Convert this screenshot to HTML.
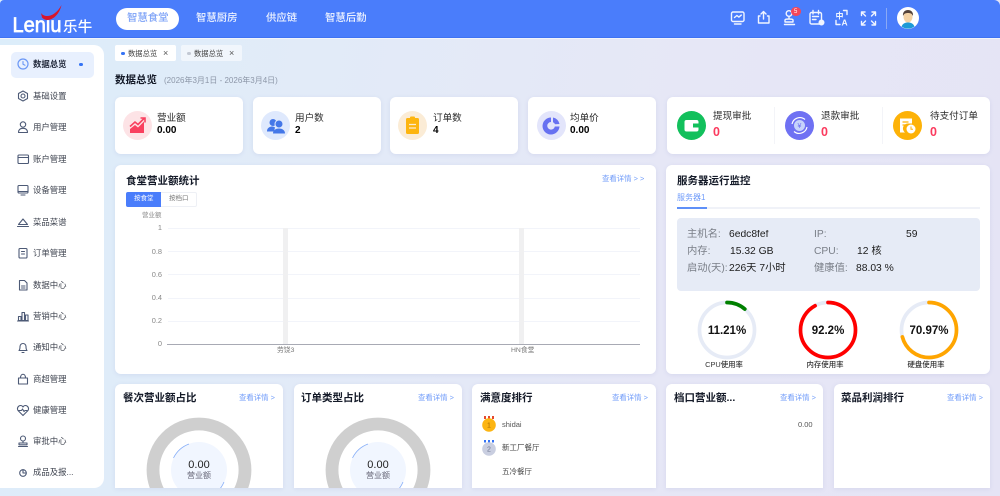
<!DOCTYPE html>
<html lang="zh-CN">
<head>
<meta charset="utf-8">
<title>数据总览</title>
<style>
*{box-sizing:border-box;margin:0;padding:0}
html,body{width:1000px;height:496px;overflow:hidden;background:#fff}
body{position:relative;font-family:"Liberation Sans","Noto Sans CJK SC",sans-serif;color:#222}
.wrap{position:absolute;left:0;top:0;width:1000px;height:496px;overflow:hidden;filter:blur(.35px)}
.bg{position:absolute;left:0;top:0;width:1000px;height:496px;background:linear-gradient(100deg,#dcedfa 0%,#e2ebf8 30%,#e6e7f6 65%,#e5e4f5 100%)}
.hd{position:absolute;left:0;top:0;width:1000px;height:37.5px;background:#4a7dfb;border-bottom:1px solid #3f73f2;border-radius:4px 6px 0 0}
.hl{position:absolute;left:0;top:37.5px;width:1000px;height:1.5px;background:#f2f4fb}
.t{position:absolute;white-space:nowrap;line-height:1}
.c{position:absolute;background:#fff;border-radius:6px;box-shadow:0 1px 4px rgba(120,130,190,.14)}
.clip{overflow:hidden;border-radius:6px 6px 0 0}
.side{position:absolute;left:0;top:45px;width:104px;height:443px;background:#fff;border-radius:0 10px 10px 0}
.act{position:absolute;left:11px;top:52px;width:83px;height:26px;background:#e8f0fe;border-radius:5px}
.m{position:absolute;left:33px;font-size:8.4px;line-height:1;color:#3f4450;white-space:nowrap}
.ic{position:absolute;left:16px;width:14px;height:14px}
.ic *{fill:none;stroke:#4d5a76;stroke-width:1.1;stroke-linecap:round;stroke-linejoin:round}
.ttl{font-size:10.5px;font-weight:700;color:#141a28}
.lnk{font-size:7.4px;color:#6f9bfa}
.lb{font-size:9.6px;color:#2b2b2b}
.val{font-size:10px;font-weight:700;color:#000}
.red{font-size:12.5px;font-weight:700;color:#fb3a5e}
.tick{position:absolute;width:30px;text-align:right;left:132px;font-size:7.4px;line-height:1;color:#888}
.grid{position:absolute;left:168px;width:472px;height:1px;background:#f2f4fa}
.il{font-size:10.3px;color:#7a7f88}
.iv{font-size:10.3px;color:#1c1c1c}
.rt{font-size:11.5px;font-weight:700;color:#111;text-align:center;width:60px}
.rl{font-size:7.4px;font-weight:500;color:#333;text-align:center;width:60px}
svg{position:absolute;overflow:visible}
</style>
</head>
<body>
<div class="wrap">
<div class="bg"></div>

<div class="hd"></div><div class="hl"></div>

<svg style="left:0;top:0" width="110" height="38">
<text x="12.500" y="32" font-family="Liberation Sans" font-size="21.500" font-weight="400" fill="#fff" stroke="#fff" stroke-width=".7" textLength="49" lengthAdjust="spacingAndGlyphs">Leniu</text>
<path d="M41 13C45 18.500 55 17 61.500 5C59 17 48 24 42 17.500Z" fill="#d8162c"/>
</svg>
<div class="t" style="left:63px;top:20.500px;font-size:14.500px;font-weight:500;color:#fff;letter-spacing:.3px">乐牛</div>

<div style="position:absolute;left:116px;top:8px;width:63px;height:22px;border-radius:11px;background:#fff"></div>
<div class="t" style="left:127px;top:14px;font-size:10.400px;color:#7ea3f7;font-weight:500">智慧食堂</div>
<div class="t" style="left:196px;top:14px;font-size:10.400px;color:#eef3ff;font-weight:500">智慧厨房</div>
<div class="t" style="left:266px;top:14px;font-size:10.400px;color:#eef3ff;font-weight:500">供应链</div>
<div class="t" style="left:325px;top:14px;font-size:10.400px;color:#eef3ff;font-weight:500">智慧后勤</div>

<svg style="left:725px;top:2px" width="200" height="36" fill="none" stroke="#f0f5ff" stroke-width="1.400" stroke-linecap="round" stroke-linejoin="round">
<rect x="6.500" y="10" width="12.500" height="9.500" rx="1.500"/><path d="M9.500 22h6.500M9.500 15.500l2.400-2 2 1.600 2.400-2"/>
<path d="M38.500 9.500l-2.500 2.500M38.500 9.500l2.500 2.500M38.500 10v7M35 14h-1.500v7h10.500v-7h-1.500"/>
<circle cx="64" cy="11.500" r="2.800"/><path d="M64 14.500v2.500M60 18c0-.8 1.500-1 4-1s4 .2 4 1v2h-8zM59.500 22.500h10"/>
<rect x="85" y="10.500" width="11.500" height="11.500" rx="1.500"/><path d="M88 8.500v3.500M93.500 8.500v3.500M87.500 14.500h6M87.500 17.500h3.500"/><circle cx="96.500" cy="20.500" r="2.300" fill="#f0f5ff"/>
<path d="M118.500 8.500h3.500v4M111 18.500v4h4"/><text x="110.500" y="16.500" font-size="8" font-weight="700" fill="#f0f5ff" stroke="none" font-family="Noto Sans CJK SC,sans-serif">中</text><text x="116.500" y="23.500" font-size="8.500" font-weight="700" fill="#f0f5ff" stroke="none">A</text>
<path d="M136.500 13.500V10H140M147 10H150.500V13.500M136.500 19.500V23H140M150.500 19.500V23H147M137 10.500l3.500 3.500M150 10.500l-3.500 3.500M137 22.500l3.500-3.500M150 22.500l-3.500-3.500"/>
</svg>
<div style="position:absolute;left:791px;top:7px;width:10px;height:9px;border-radius:5px;background:#f4475a"></div>
<div class="t" style="left:794px;top:8.500px;font-size:6px;color:#fff">5</div>
<div style="position:absolute;left:886px;top:8px;width:1px;height:21px;background:#8aa9f5"></div>
<svg style="left:897px;top:7px" width="22" height="22">
<circle cx="11" cy="11" r="11" fill="#fff"/>
<path d="M4.500 19.500C6 16 8.500 15.500 11 15.500s5 .5 6.500 4a11 11 0 0 1-13 0z" fill="#1d9ad6"/>
<ellipse cx="11" cy="10" rx="4.500" ry="5.500" fill="#f4d2a4"/>
<path d="M6 9c-.5-4 2-6 5-6s5.500 2 5 6c-1-2-2-3-5-3S7 7 6 9z" fill="#54433a"/>
</svg>

<div class="side"></div>
<div class="act"></div>
<svg class="ic" style="top:57px" viewBox="0 0 14 14"><circle cx="7" cy="7" r="5" style="stroke:#6b97f5;stroke-width:1.200"/><path d="M7 4.500V7.200L9 8.200" style="stroke:#6b97f5"/></svg>
<div class="m" style="top:60px;color:#1f2638;font-weight:700">数据总览</div>
<div style="position:absolute;left:79px;top:62.500px;width:3.500px;height:3.500px;border-radius:50%;background:#3573f5"></div>

<svg class="ic" style="top:89px" viewBox="0 0 14 14"><path d="M7 2l4.500 2.500v5L7 12 2.500 9.500v-5z"/><circle cx="7" cy="7" r="2"/></svg>
<div class="m" style="top:92px">基础设置</div>
<svg class="ic" style="top:120px" viewBox="0 0 14 14"><circle cx="7" cy="4.500" r="2.700"/><path d="M2.500 12.500c0-3 2-4.200 4.500-4.200s4.500 1.200 4.500 4.200z"/></svg>
<div class="m" style="top:123px">用户管理</div>
<svg class="ic" style="top:152px" viewBox="0 0 14 14"><rect x="2" y="3" width="10.500" height="8.500" rx="1"/><path d="M2 5.500h10.500"/></svg>
<div class="m" style="top:155px">账户管理</div>
<svg class="ic" style="top:183px" viewBox="0 0 14 14"><rect x="2" y="2.500" width="10" height="7.500" rx="1"/><path d="M5 12h4M2 8.500h10"/></svg>
<div class="m" style="top:186px">设备管理</div>
<svg class="ic" style="top:215px" viewBox="0 0 14 14"><path d="M2.500 9.500L7 4l4.500 5.500zM1.500 11.500h11"/></svg>
<div class="m" style="top:218px">菜品菜谱</div>
<svg class="ic" style="top:246px" viewBox="0 0 14 14"><rect x="3" y="2.500" width="8" height="9.500" rx="1"/><path d="M5.500 5.500h3M5.500 8h3"/></svg>
<div class="m" style="top:249px">订单管理</div>
<svg class="ic" style="top:278px" viewBox="0 0 14 14"><path d="M3.500 2.500H8.500L11 5v7H3.500zM5.500 8h3.500M5.500 10h3.500"/></svg>
<div class="m" style="top:281px">数据中心</div>
<svg class="ic" style="top:309px" viewBox="0 0 14 14"><path d="M1.500 12h11M2.500 7.500h2.500v4H2.500zM6 3.500h2.500v8H6zM9.500 6h2.500v5.500H9.500z"/></svg>
<div class="m" style="top:312px">营销中心</div>
<svg class="ic" style="top:340px" viewBox="0 0 14 14"><path d="M3 10.500c1-1 1-2 1-4a3 3 0 0 1 6 0c0 2 0 3 1 4zM6 12.500h2"/></svg>
<div class="m" style="top:343px">通知中心</div>
<svg class="ic" style="top:372px" viewBox="0 0 14 14"><path d="M2.500 6h9v6h-9zM4.500 6c0-5 5-5 5 0"/></svg>
<div class="m" style="top:375px">商超管理</div>
<svg class="ic" style="top:403px" viewBox="0 0 14 14"><path d="M7 12.500L2 7.500C.5 5 2.500 2.500 4.500 2.500c1 0 2 .5 2.500 1.500.5-1 1.500-1.500 2.500-1.500 2 0 4 2.500 2.500 5zM2.500 7.500h3l1-1.500 1.500 2.500 1-1h2"/></svg>
<div class="m" style="top:406px">健康管理</div>
<svg class="ic" style="top:434px" viewBox="0 0 14 14"><circle cx="7" cy="4.500" r="2.500"/><path d="M7 7v1.500M3 9h8v1.800H3zM2.500 12.500h9"/></svg>
<div class="m" style="top:437px">审批中心</div>
<svg class="ic" style="top:466px" viewBox="0 0 14 14"><circle cx="7" cy="7" r="3.300"/><path d="M7 7V3.700M7 7h3.300"/></svg>
<div class="m" style="top:468px">成品及报...</div>

<div style="position:absolute;left:115px;top:45px;width:61px;height:16px;background:#fff;border-radius:2px"></div>
<div style="position:absolute;left:121px;top:51.500px;width:3.500px;height:3.500px;border-radius:50%;background:#3573f5"></div>
<div class="t" style="left:128px;top:49.500px;font-size:7.300px;color:#444">数据总览</div>
<div class="t" style="left:163px;top:48.500px;font-size:9px;color:#555">×</div>
<div style="position:absolute;left:181px;top:45px;width:61px;height:16px;background:rgba(255,255,255,.55);border-radius:2px"></div>
<div style="position:absolute;left:187px;top:51.500px;width:3.500px;height:3.500px;border-radius:50%;background:#c3c9d4"></div>
<div class="t" style="left:194px;top:49.500px;font-size:7.300px;color:#444">数据总览</div>
<div class="t" style="left:229px;top:48.500px;font-size:9px;color:#555">×</div>

<div class="t ttl" style="left:115px;top:75px;font-size:10.500px">数据总览</div>
<div class="t" style="left:164px;top:77px;font-size:8px;color:#8d97a8">(2026年3月1日 - 2026年3月4日)</div>

<!-- stat cards -->
<div class="c" style="left:115px;top:97px;width:128px;height:57px"></div>
<div class="c" style="left:253px;top:97px;width:128px;height:57px"></div>
<div class="c" style="left:390px;top:97px;width:128px;height:57px"></div>
<div class="c" style="left:528px;top:97px;width:128px;height:57px"></div>
<div class="c" style="left:667px;top:97px;width:323px;height:57px"></div>

<svg style="left:123px;top:111px" width="29" height="29"><circle cx="14.500" cy="14.500" r="14.500" fill="#fde3e6"/><path d="M7 22v-4l5-4 3 2.500 6-6v11.500z" fill="#f9405f"/><path d="M7 15.500l5-4.500 3 2.500 6-6M17.500 7H22v4.500" fill="none" stroke="#f9405f" stroke-width="1.600"/></svg>
<div class="t lb" style="left:157px;top:114px">营业额</div>
<div class="t val" style="left:157px;top:126px">0.00</div>

<svg style="left:261px;top:111px" width="29" height="29"><circle cx="14.500" cy="14.500" r="14.500" fill="#dfe9fd"/><circle cx="12" cy="11.500" r="3.500" fill="#4477e8"/><path d="M6 20c0-3 3-4.500 5-4.500 1 0 2 .3 3 1l-1 4H6z" fill="#4477e8"/><circle cx="18" cy="13" r="4" fill="#4477e8" stroke="#dfe9fd"/><path d="M12 22.500c0-3.500 3-5 6-5s6 1.500 6 5z" fill="#4477e8"/></svg>
<div class="t lb" style="left:295px;top:114px">用户数</div>
<div class="t val" style="left:295px;top:126px">2</div>

<svg style="left:398px;top:111px" width="29" height="29"><circle cx="14.500" cy="14.500" r="14.500" fill="#fbecd6"/><rect x="8" y="7" width="13" height="16" rx="1.500" fill="#fdb50f"/><rect x="12" y="5.500" width="5" height="3" rx="1" fill="#fdb50f"/><path d="M11 13.500h7M11 17h7" stroke="#fbecd6" stroke-width="1.200"/></svg>
<div class="t lb" style="left:433px;top:114px">订单数</div>
<div class="t val" style="left:433px;top:126px">4</div>

<svg style="left:537px;top:111px" width="29" height="29"><circle cx="14.500" cy="14.500" r="14.500" fill="#e3e5fb"/><path d="M14 6.500a8.500 8.500 0 1 0 8.500 9h-4.700a3.800 3.800 0 1 1-3.800-4.500z" fill="#6771f1"/><path d="M16 6.500a8 8 0 0 1 6.500 6.500l-4.500.3a3.800 3.800 0 0 0-2-2z" fill="#6771f1"/></svg>
<div class="t lb" style="left:570px;top:114px">均单价</div>
<div class="t val" style="left:570px;top:126px">0.00</div>

<svg style="left:677px;top:111px" width="29" height="29"><circle cx="14.500" cy="14.500" r="14.500" fill="#12c05c"/><rect x="7.500" y="9" width="14" height="11.500" rx="2" fill="#fff"/><rect x="16" y="12.500" width="5.500" height="4" fill="#12c05c"/></svg>
<div class="t lb" style="left:713px;top:112px">提现审批</div>
<div class="t red" style="left:713px;top:126px">0</div>
<div style="position:absolute;left:774px;top:107px;width:1px;height:37px;background:#f3f4f8"></div>

<svg style="left:785px;top:111px" width="29" height="29"><circle cx="14.500" cy="14.500" r="14.500" fill="#6f71f3"/><circle cx="14.500" cy="14.500" r="5.500" fill="#c6d3fb"/><path d="M7 13a8 8 0 0 1 13-4.500M22 16a8 8 0 0 1-13 4.500" fill="none" stroke="#fff" stroke-width="1.200"/><text x="14.500" y="17" text-anchor="middle" font-size="7" fill="#6f71f3">¥</text></svg>
<div class="t lb" style="left:821px;top:112px">退款审批</div>
<div class="t red" style="left:821px;top:126px">0</div>
<div style="position:absolute;left:882px;top:107px;width:1px;height:37px;background:#f3f4f8"></div>

<svg style="left:893px;top:111px" width="29" height="29"><circle cx="14.500" cy="14.500" r="14.500" fill="#fdb208"/><path d="M7 7.500h12v5h-3.500a5 5 0 0 0-3.500 9H7z" fill="#fff"/><circle cx="18" cy="18" r="4.500" fill="#fff"/><path d="M18 15.500v2.700h2" fill="none" stroke="#fdb208" stroke-width="1"/><path d="M9.500 11h6M9.500 14h3" stroke="#fdb208" stroke-width="1.200"/></svg>
<div class="t lb" style="left:930px;top:112px">待支付订单</div>
<div class="t red" style="left:930px;top:126px">0</div>

<!-- chart card -->
<div class="c" style="left:115px;top:165px;width:541px;height:209px"></div>
<div class="t ttl" style="left:126px;top:176px">食堂营业额统计</div>
<div class="t lnk" style="left:602px;top:175px">查看详情 &gt; &gt;</div>
<div style="position:absolute;left:126px;top:192px;width:71px;height:15px;border:1px solid #eef0f5;border-radius:2px"></div>
<div style="position:absolute;left:126px;top:192px;width:35px;height:15px;background:#4a7dfb;border-radius:2px 0 0 2px"></div>
<div class="t" style="left:134px;top:196px;font-size:6.500px;color:#fff">按食堂</div>
<div class="t" style="left:169px;top:196px;font-size:6.500px;color:#777">按档口</div>
<div class="t" style="left:142px;top:212.500px;font-size:6.500px;color:#888">营业额</div>

<div class="grid" style="top:228px"></div>
<div class="grid" style="top:251px"></div>
<div class="grid" style="top:274px"></div>
<div class="grid" style="top:298px"></div>
<div class="grid" style="top:321px"></div>
<div style="position:absolute;left:283px;top:228px;width:5px;height:116px;background:#f0f0f1"></div>
<div style="position:absolute;left:519px;top:228px;width:5px;height:116px;background:#f0f0f1"></div>
<div style="position:absolute;left:167px;top:344px;width:473px;height:1px;background:#a8aab4"></div>
<div class="tick" style="top:224px">1</div>
<div class="tick" style="top:247.500px">0.8</div>
<div class="tick" style="top:270.500px">0.6</div>
<div class="tick" style="top:294px">0.4</div>
<div class="tick" style="top:317px">0.2</div>
<div class="tick" style="top:340px">0</div>
<div class="t" style="left:277px;top:348px;font-size:6.800px;color:#777">劳饶3</div>
<div class="t" style="left:511px;top:348px;font-size:6.800px;color:#777">HN食堂</div>

<!-- server card -->
<div class="c" style="left:666px;top:165px;width:324px;height:209px"></div>
<div class="t ttl" style="left:677px;top:176px">服务器运行监控</div>
<div class="t" style="left:677px;top:194px;font-size:8px;color:#6f9bfa">服务器1</div>
<div style="position:absolute;left:677px;top:207px;width:303px;height:1.500px;background:#f0f2f8"></div>
<div style="position:absolute;left:677px;top:207px;width:30px;height:1.500px;background:#5f90f8"></div>
<div style="position:absolute;left:677px;top:218px;width:303px;height:73px;background:#e6ebf6;border-radius:4px"></div>
<div class="t il" style="left:687px;top:230px">主机名:</div>
<div class="t iv" style="left:729px;top:230px;width:40px;overflow:hidden">6edc8fef</div>
<div class="t il" style="left:814px;top:230px">IP:</div>
<div class="t iv" style="left:906px;top:230px">59</div>
<div class="t il" style="left:687px;top:247px">内存:</div>
<div class="t iv" style="left:730px;top:247px">15.32 GB</div>
<div class="t il" style="left:814px;top:247px">CPU:</div>
<div class="t iv" style="left:857px;top:247px">12 核</div>
<div class="t il" style="left:687px;top:264px">启动(天):</div>
<div class="t iv" style="left:729px;top:264px">226天 7小时</div>
<div class="t il" style="left:814px;top:264px">健康值:</div>
<div class="t iv" style="left:856px;top:264px">88.03 %</div>

<svg style="left:690px;top:295px" width="280" height="70" fill="none" stroke-width="3.700">
<circle cx="37" cy="35" r="27.500" stroke="#e6ebf6"/>
<circle cx="138" cy="35" r="27.500" stroke="#e6ebf6"/>
<circle cx="239" cy="35" r="27.500" stroke="#e6ebf6"/>
<circle cx="37" cy="35" r="27.500" stroke="#008000" stroke-linecap="round" pathLength="100" stroke-dasharray="11.210 100" transform="rotate(-90 37 35)"/>
<circle cx="138" cy="35" r="27.500" stroke="#ff0000" stroke-linecap="round" pathLength="100" stroke-dasharray="92.200 100" transform="rotate(-90 138 35)"/>
<circle cx="239" cy="35" r="27.500" stroke="#ffa500" stroke-linecap="round" pathLength="100" stroke-dasharray="70.970 100" transform="rotate(-90 239 35)"/>
</svg>
<div class="t rt" style="left:697px;top:326px">11.21%</div>
<div class="t rt" style="left:798px;top:326px">92.2%</div>
<div class="t rt" style="left:899px;top:326px">70.97%</div>
<div class="t rl" style="left:694px;top:361px">CPU使用率</div>
<div class="t rl" style="left:795px;top:361px">内存使用率</div>
<div class="t rl" style="left:896px;top:361px">硬盘使用率</div>

<!-- row 3 -->
<div class="c clip" style="left:115px;top:384px;width:168px;height:104px">
<svg style="left:0;top:0" width="168" height="104"><circle cx="84" cy="86" r="46" fill="none" stroke="#cfcfcf" stroke-width="12.800"/><circle cx="84" cy="86" r="28" fill="#f1f6ff"/><path d="M58.500 74A28 28 0 0 1 74 60M109 98A28 28 0 0 1 104 106" fill="none" stroke="#86aef8" stroke-width=".8"/></svg>
</div>
<div class="c clip" style="left:294px;top:384px;width:168px;height:104px">
<svg style="left:0;top:0" width="168" height="104"><circle cx="84" cy="86" r="46" fill="none" stroke="#cfcfcf" stroke-width="12.800"/><circle cx="84" cy="86" r="28" fill="#f1f6ff"/><path d="M58.500 74A28 28 0 0 1 74 60M109 98A28 28 0 0 1 104 106" fill="none" stroke="#86aef8" stroke-width=".8"/></svg>
</div>
<div class="c clip" style="left:472px;top:384px;width:184px;height:104px"></div>
<div class="c clip" style="left:666px;top:384px;width:157px;height:104px"></div>
<div class="c clip" style="left:834px;top:384px;width:156px;height:104px"></div>

<div class="t ttl" style="left:123px;top:393px">餐次营业额占比</div>
<div class="t lnk" style="left:239px;top:394px">查看详情 &gt;</div>
<div class="t" style="left:179px;top:460px;width:40px;text-align:center;font-size:11px;color:#222">0.00</div>
<div class="t" style="left:178px;top:472px;width:42px;text-align:center;font-size:8px;color:#667">营业额</div>

<div class="t ttl" style="left:301px;top:393px">订单类型占比</div>
<div class="t lnk" style="left:418px;top:394px">查看详情 &gt;</div>
<div class="t" style="left:358px;top:460px;width:40px;text-align:center;font-size:11px;color:#222">0.00</div>
<div class="t" style="left:357px;top:472px;width:42px;text-align:center;font-size:8px;color:#667">营业额</div>

<div class="t ttl" style="left:480px;top:393px">满意度排行</div>
<div class="t lnk" style="left:612px;top:394px">查看详情 &gt;</div>
<svg style="left:481px;top:415px" width="16" height="40">
<path d="M3 1h2v3H3zM7 1h2v3H7zM11 1h2v3h-2z" fill="#e6492d"/>
<circle cx="8" cy="10" r="6.800" fill="#fcb513"/><text x="8" y="12.500" text-anchor="middle" font-size="7" fill="#a86a00">1</text>
<path d="M3 25h2v2.500H3zM7 25h2v2.500H7zM11 25h2v2.500h-2z" fill="#3573f5"/>
<circle cx="8" cy="34" r="6.800" fill="#c9cee0"/><text x="8" y="36.500" text-anchor="middle" font-size="7" fill="#6d7590">2</text>
</svg>
<div class="t" style="left:502px;top:420.500px;font-size:7.500px;color:#555">shidai</div>
<div class="t" style="left:502px;top:444px;font-size:7.500px;color:#444">新工厂餐厅</div>
<div class="t" style="left:502px;top:468px;font-size:7.500px;color:#444">五冷餐厅</div>

<div class="t ttl" style="left:674px;top:393px">档口营业额...</div>
<div class="t lnk" style="left:780px;top:394px">查看详情 &gt;</div>
<div class="t" style="left:798px;top:420.500px;font-size:7.500px;color:#555">0.00</div>

<div class="t ttl" style="left:841px;top:393px">菜品利润排行</div>
<div class="t lnk" style="left:947px;top:394px">查看详情 &gt;</div>
</div>
</body>
</html>
